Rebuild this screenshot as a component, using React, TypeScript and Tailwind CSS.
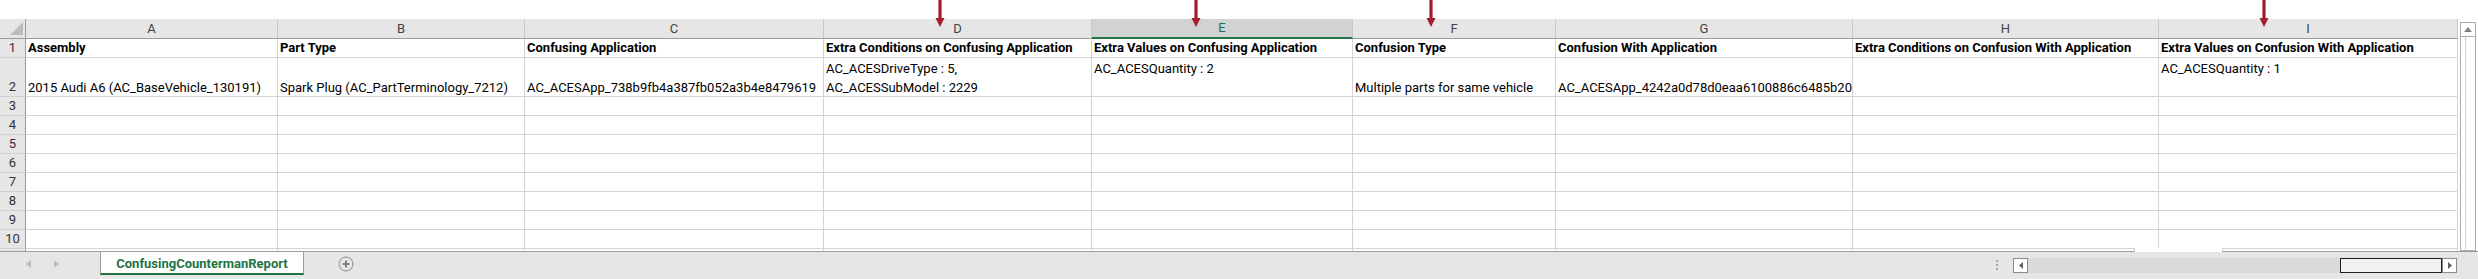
import React from "react";

const W = [
  "w-[26px]",
  "w-[252px]",
  "w-[247px]",
  "w-[299px]",
  "w-[268px]",
  "w-[261px]",
  "w-[203px]",
  "w-[297px]",
  "w-[306px]",
  "w-[299px]",
];

const LETTERS = ["A", "B", "C", "D", "E", "F", "G", "H", "I"];

const HEAD = [
  "Assembly",
  "Part Type",
  "Confusing Application",
  "Extra Conditions on Confusing Application",
  "Extra Values on Confusing Application",
  "Confusion Type",
  "Confusion With Application",
  "Extra Conditions on Confusion With Application",
  "Extra Values on Confusion With Application",
];

const ROW2: string[][] = [
  ["2015 Audi A6 (AC_BaseVehicle_130191)"],
  ["Spark Plug (AC_PartTerminology_7212)"],
  ["AC_ACESApp_738b9fb4a387fb052a3b4e8479619"],
  ["AC_ACESDriveType : 5,", "AC_ACESSubModel : 2229"],
  ["AC_ACESQuantity : 2", "\u00a0"],
  ["Multiple parts for same vehicle"],
  ["AC_ACESApp_4242a0d78d0eaa6100886c6485b20"],
  [""],
  ["AC_ACESQuantity : 1", "\u00a0"],
];

function Arrow({ className }: { className: string }) {
  return (
    <svg className={`absolute top-0 ${className}`} width="10" height="27" viewBox="0 0 10 27">
      <rect x="3.4" y="0" width="3.2" height="19" fill="#a21e2c" />
      <polygon points="0.5,18 9.5,18 5,27" fill="#a21e2c" />
    </svg>
  );
}

function HeaderRow() {
  return (
    <div className="flex h-[20px] shrink-0">
      <div className={`${W[0]} shrink-0 relative bg-[#e6e6e6] border-r border-b border-[#9b9b9b]`}>
        <svg className="absolute left-[10px] top-[3px]" width="14" height="14" viewBox="0 0 14 14">
          <polygon points="0,13 13,13 13,0" fill="#bdbdbd" />
        </svg>
      </div>
      {LETTERS.map((l, i) => {
        const sel = l === "E";
        return (
          <div
            key={l}
            className={`${W[i + 1]} shrink-0 flex items-center justify-center leading-[18px] text-[13px] border-r border-[#c6c6c6] ${
              sel
                ? "bg-[#d2d2d2] border-b-2 border-b-[#217346] text-[#217346]"
                : "bg-[#e6e6e6] border-b border-b-[#9b9b9b] text-[#444444]"
            }`}
          >
            {l}
          </div>
        );
      })}
    </div>
  );
}

function RowNum({ n }: { n: number }) {
  return (
    <div
      className={`${W[0]} shrink-0 flex items-end justify-center bg-[#e6e6e6] border-r border-r-[#9b9b9b] border-b border-b-[#d0d0d0] text-[13px] leading-[18px] text-[#333333]`}
    >
      {n}
    </div>
  );
}

function Row1() {
  return (
    <div className="flex h-[19px] shrink-0">
      <RowNum n={1} />
      {HEAD.map((h, i) => (
        <div
          key={i}
          className={`${W[i + 1]} shrink-0 flex items-end pl-[2px] overflow-hidden whitespace-nowrap border-r border-b border-[#d4d4d4] font-bold text-[13px] leading-[18px]`}
        >
          {h}
        </div>
      ))}
    </div>
  );
}

function Row2() {
  return (
    <div className="flex h-[39px] shrink-0">
      <RowNum n={2} />
      {ROW2.map((lines, i) => (
        <div
          key={i}
          className={`${W[i + 1]} shrink-0 flex flex-col justify-end pl-[2px] overflow-hidden whitespace-nowrap border-r border-b border-[#d4d4d4] text-[13px] leading-[19px]`}
        >
          <div className="translate-y-[1px]">
            {lines.map((t, j) => (
              <div key={j}>{t}</div>
            ))}
          </div>
        </div>
      ))}
    </div>
  );
}

function EmptyRow({ n }: { n: number }) {
  return (
    <div className="flex h-[19px] shrink-0">
      <RowNum n={n} />
      {LETTERS.map((l, i) => (
        <div key={l} className={`${W[i + 1]} shrink-0 border-r border-b border-[#d4d4d4]`} />
      ))}
    </div>
  );
}

function PartialRow() {
  return (
    <div className="flex h-[2px] shrink-0">
      <div className={`${W[0]} shrink-0 bg-[#e6e6e6] border-r border-[#9b9b9b]`} />
      {LETTERS.map((l, i) => (
        <div key={l} className={`${W[i + 1]} shrink-0 border-r border-[#d4d4d4]`} />
      ))}
    </div>
  );
}

function VScroll() {
  return (
    <div className="w-[16px] shrink-0 mt-[22px] h-[229px] flex flex-col border border-[#ababab] bg-white">
      <div className="h-[14px] shrink-0 border-b border-[#ababab] flex items-center justify-center">
        <svg width="8" height="5" viewBox="0 0 8 5">
          <polygon points="0,5 8,5 4,0" fill="#7f7f7f" />
        </svg>
      </div>
      <div className="flex-1 ml-[4px] border-l border-[#d0d0d0]" />
    </div>
  );
}

function TabBar() {
  return (
    <div className="h-[28px] shrink-0 flex items-start bg-[#e6e6e6] border-t border-[#9b9b9b]">
      <div className="w-[100px] shrink-0 h-[24px] flex items-center pl-[26px]">
        <svg width="5" height="8" viewBox="0 0 5 8">
          <polygon points="5,0 5,8 0,4" fill="#bcbcbc" />
        </svg>
        <svg className="ml-[23px]" width="5" height="8" viewBox="0 0 5 8">
          <polygon points="0,0 0,8 5,4" fill="#bcbcbc" />
        </svg>
      </div>
      <div className="w-[204px] shrink-0 h-[23px] bg-white border-x border-[#9b9b9b] border-b-2 border-b-[#217346] flex items-center justify-center pt-[2px] font-bold text-[13px] leading-[18px] text-[#217346]">
        ConfusingCountermanReport
      </div>
      <svg className="ml-[34px] mt-[4px] shrink-0" width="16" height="16" viewBox="0 0 16 16">
        <circle cx="8" cy="8" r="7" fill="none" stroke="#8a8a8a" strokeWidth="1" />
        <path d="M8 4.5 V11.5 M4.5 8 H11.5" stroke="#6f6f6f" strokeWidth="1.6" />
      </svg>
      <div className="flex-1" />
      <svg className="mt-[8px] shrink-0" width="2" height="11" viewBox="0 0 2 11">
        <rect x="0" y="0" width="2" height="2" fill="#a6a6a6" />
        <rect x="0" y="4" width="2" height="2" fill="#a6a6a6" />
        <rect x="0" y="8" width="2" height="2" fill="#a6a6a6" />
      </svg>
      <div className="ml-[15px] mt-[6px] h-[15px] flex shrink-0">
        <div className="w-[15px] h-full bg-white border border-[#8a8a8a] flex items-center justify-center">
          <svg width="4" height="7" viewBox="0 0 4 7">
            <polygon points="4,0 4,7 0,3.5" fill="#5f5f5f" />
          </svg>
        </div>
        <div className="w-[312px] h-full bg-[#dadada]" />
        <div className="w-[102px] h-full bg-[#f1f1f1] border border-[#1f1f1f]" />
        <div className="w-[15px] h-full bg-white border border-[#8a8a8a] flex items-center justify-center">
          <svg width="4" height="7" viewBox="0 0 4 7">
            <polygon points="0,0 0,7 4,3.5" fill="#5f5f5f" />
          </svg>
        </div>
      </div>
      <div className="w-[21px] shrink-0" />
    </div>
  );
}

export default function App() {
  return (
    <div className="relative w-[2478px] h-[279px] overflow-hidden bg-white text-black font-[Roboto,'Liberation_Sans',sans-serif]">
      <div className="flex h-[251px]">
        <div className="w-[2458px] shrink-0 flex flex-col">
          <div className="h-[19px] shrink-0" />
          <HeaderRow />
          <Row1 />
          <Row2 />
          {[3, 4, 5, 6, 7, 8, 9, 10].map((n) => (
            <EmptyRow key={n} n={n} />
          ))}
          <PartialRow />
        </div>
        <div className="w-[2px] shrink-0" />
        <VScroll />
        <div className="w-[2px] shrink-0" />
      </div>
      <TabBar />
      <div className="absolute left-[2134px] top-[248px] w-[89px] h-[4px] bg-white border-x border-[#c8c8c8]" />
      <Arrow className="left-[935px]" />
      <Arrow className="left-[1191px]" />
      <Arrow className="left-[1426px]" />
      <Arrow className="left-[2259px]" />
    </div>
  );
}
